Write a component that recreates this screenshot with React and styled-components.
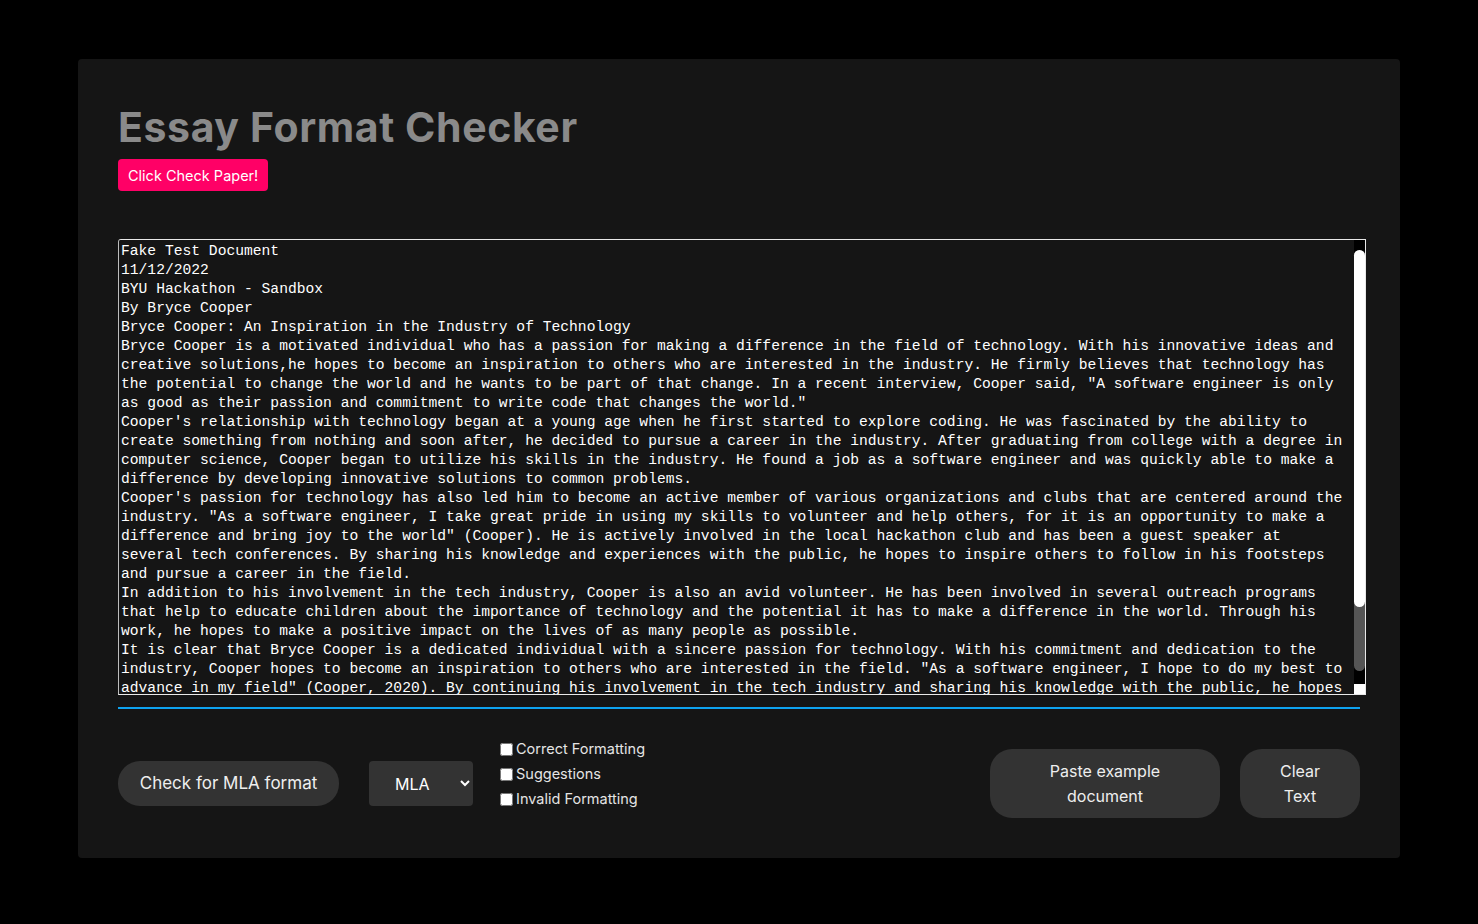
import React from "react";
import styled, { createGlobalStyle } from "styled-components";

const essay = `Fake Test Document
11/12/2022
BYU Hackathon - Sandbox
By Bryce Cooper
Bryce Cooper: An Inspiration in the Industry of Technology
Bryce Cooper is a motivated individual who has a passion for making a difference in the field of technology. With his innovative ideas and creative solutions,he hopes to become an inspiration to others who are interested in the industry. He firmly believes that technology has the potential to change the world and he wants to be part of that change. In a recent interview, Cooper said, "A software engineer is only as good as their passion and commitment to write code that changes the world."
Cooper's relationship with technology began at a young age when he first started to explore coding. He was fascinated by the ability to create something from nothing and soon after, he decided to pursue a career in the industry. After graduating from college with a degree in computer science, Cooper began to utilize his skills in the industry. He found a job as a software engineer and was quickly able to make a difference by developing innovative solutions to common problems.
Cooper's passion for technology has also led him to become an active member of various organizations and clubs that are centered around the industry. "As a software engineer, I take great pride in using my skills to volunteer and help others, for it is an opportunity to make a difference and bring joy to the world" (Cooper). He is actively involved in the local hackathon club and has been a guest speaker at several tech conferences. By sharing his knowledge and experiences with the public, he hopes to inspire others to follow in his footsteps and pursue a career in the field.
In addition to his involvement in the tech industry, Cooper is also an avid volunteer. He has been involved in several outreach programs that help to educate children about the importance of technology and the potential it has to make a difference in the world. Through his work, he hopes to make a positive impact on the lives of as many people as possible.
It is clear that Bryce Cooper is a dedicated individual with a sincere passion for technology. With his commitment and dedication to the industry, Cooper hopes to become an inspiration to others who are interested in the field. "As a software engineer, I hope to do my best to advance in my field" (Cooper, 2020). By continuing his involvement in the tech industry and sharing his knowledge with the public, he hopes to inspire the next generation of engineers to make a difference in the world.
Works Cited
Cooper, Bryce. Personal interview. 12 Oct. 2020.
Cooper, Bryce. "Giving Back Through Technology." BYU Hackathon Blog, 2020.`;

const GlobalStyle = createGlobalStyle`
  body {
    margin: 0;
    background: #000;
    font-family: Inter, "Noto Sans", sans-serif;
  }
`;

const Page = styled.div`
  padding: 59px 78px 66px;
`;

const Card = styled.main`
  background: #151515;
  border-radius: 4px;
  padding: 40px 40px 40px;
  display: flex;
  flex-direction: column;
`;

const Title = styled.h1`
  margin: 0;
  font-size: 41px;
  line-height: 57px;
  font-weight: 700;
  color: #8a8a8a;
  letter-spacing: 0.6px;
`;

const CheckButton = styled.button`
  align-self: flex-start;
  height: 32px;
  padding: 0 10px;
  border: none;
  border-radius: 4px;
  background: #ff0066;
  color: #fff;
  font-family: inherit;
  font-size: 14.5px;
  margin-top: 3px;
`;

const EditorBox = styled.div`
  position: relative;
  margin-top: 48px;
`;

const Editor = styled.textarea`
  display: block;
  box-sizing: border-box;
  width: calc(100% + 6px);
  height: 456px;
  padding: 2px 18px 2px 2px;
  margin: 0;
  border: 1px solid #e8e8e8;
  border-left-color: #bdbdbd;
  border-radius: 3px 0 0 0;
  background: #151515;
  color: #fff;
  font-family: "Liberation Mono", monospace;
  font-size: 14.65px;
  line-height: 19px;
  resize: vertical;
  outline: none;
  scrollbar-width: none;

  &::-webkit-scrollbar {
    display: none;
  }
`;

/* stands in for the textarea's styled scrollbar */
const ScrollRail = styled.div`
  position: absolute;
  top: 1px;
  right: -5px;
  width: 11px;
  height: 444px;
  padding: 10px 0 13px;
  box-sizing: border-box;
  background: #000;
  pointer-events: none;
  display: flex;
  flex-direction: column;
`;

const ScrollTrack = styled.div`
  flex: 1;
  background: #555;
  border-radius: 6px;
`;

const ScrollThumb = styled.div`
  height: 357px;
  background: #fff;
  border-radius: 6px;
`;

const Resizer = styled.div`
  position: absolute;
  right: -5px;
  bottom: 1px;
  width: 11px;
  height: 10px;
  background: #fff;
  pointer-events: none;
`;

const Divider = styled.div`
  height: 2px;
  background: #0ea2ef;
  margin-top: 12px;
`;

const Controls = styled.div`
  margin-top: 40px;
  display: flex;
  align-items: center;
`;

const PillButton = styled.button`
  width: ${({ $w }) => $w}px;
  height: ${({ $h }) => $h}px;
  margin-right: ${({ $gap }) => $gap || 0}px;
  border: none;
  border-radius: 22px;
  background: #333;
  color: #eee;
  font-family: inherit;
  font-size: ${({ $size }) => $size || 16}px;
  line-height: 25px;
  padding: 0 14px;
`;

const Select = styled.select`
  width: 104px;
  height: 45px;
  margin: 0 27px 0 30px;
  border: none;
  border-radius: 4px;
  background: #333;
  color: #fff;
  font-family: inherit;
  font-size: 16px;
  padding: 0 8px 0 22px;
`;

const Options = styled.div`
  display: flex;
  flex-direction: column;
  gap: 7px;
  margin-top: -19px;
  flex: 1;
`;

const Option = styled.label`
  display: flex;
  align-items: center;
  gap: 3px;
  color: #e4e4e4;
  font-size: 14.5px;
  line-height: 18px;

  input {
    margin: 0;
    width: 13px;
    height: 13px;
  }
`;

export default function App() {
  return (
    <Page>
      <GlobalStyle />
      <Card>
        <Title>Essay Format Checker</Title>
        <CheckButton>Click Check Paper!</CheckButton>
        <EditorBox>
          <Editor defaultValue={essay} spellCheck={false} />
          <ScrollRail>
            <ScrollTrack>
              <ScrollThumb />
            </ScrollTrack>
          </ScrollRail>
          <Resizer />
        </EditorBox>
        <Divider />
        <Controls>
          <PillButton $w={221} $h={45} $size={17}>
            Check for MLA format
          </PillButton>
          <Select defaultValue="MLA">
            <option>MLA</option>
            <option>APA</option>
          </Select>
          <Options>
            <Option>
              <input type="checkbox" /> Correct Formatting
            </Option>
            <Option>
              <input type="checkbox" /> Suggestions
            </Option>
            <Option>
              <input type="checkbox" /> Invalid Formatting
            </Option>
          </Options>
          <PillButton $w={230} $h={69} $gap={20}>
            Paste example
            <br />
            document
          </PillButton>
          <PillButton $w={120} $h={69}>
            Clear
            <br />
            Text
          </PillButton>
        </Controls>
      </Card>
    </Page>
  );
}
